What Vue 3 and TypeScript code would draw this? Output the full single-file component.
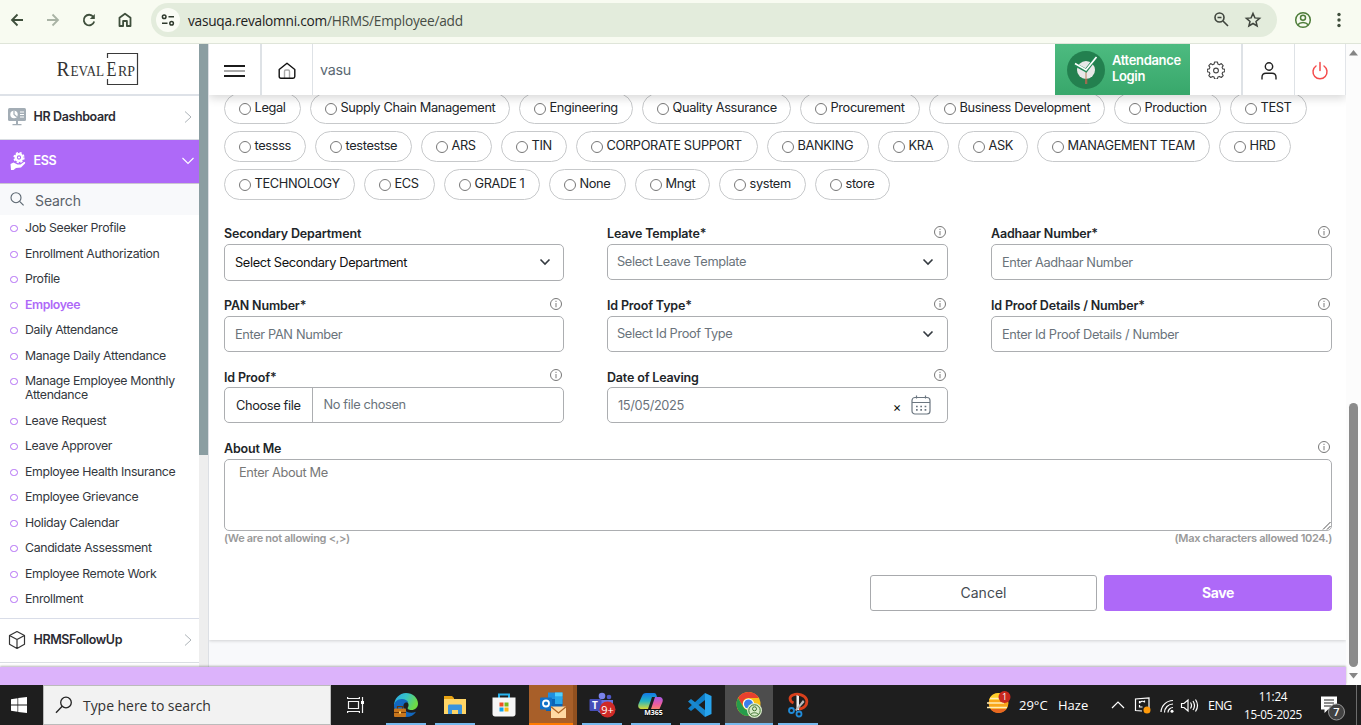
<script setup lang="ts">
interface Field {
  label: string
  text: string
  kind: 'input' | 'select' | 'file' | 'date' | 'none'
  info: boolean
  strong?: boolean
}

const chipRows: [string, number][][] = [
  [['Legal', 77], ['Supply Chain Management', 200], ['Engineering', 114], ['Quality Assurance', 149], ['Procurement', 120], ['Business Development', 176], ['Production', 107], ['TEST', 77]],
  [['tessss', 82], ['testestse', 97], ['ARS', 71], ['TIN', 66], ['CORPORATE SUPPORT', 182], ['BANKING', 102], ['KRA', 71], ['ASK', 70], ['MANAGEMENT TEAM', 173], ['HRD', 72]],
  [['TECHNOLOGY', 131], ['ECS', 71], ['GRADE 1', 96], ['None', 77], ['Mngt', 75], ['system', 87], ['store', 75]],
]

const menu = [
  'Job Seeker Profile', 'Enrollment Authorization', 'Profile', 'Employee', 'Daily Attendance',
  'Manage Daily Attendance', 'Manage Employee Monthly Attendance', 'Leave Request', 'Leave Approver',
  'Employee Health Insurance', 'Employee Grievance', 'Holiday Calendar', 'Candidate Assessment',
  'Employee Remote Work', 'Enrollment',
]

const fields: Field[] = [
  { label: 'Secondary Department', text: 'Select Secondary Department', kind: 'select', info: false, strong: true },
  { label: 'Leave Template*', text: 'Select Leave Template', kind: 'select', info: true },
  { label: 'Aadhaar Number*', text: 'Enter Aadhaar Number', kind: 'input', info: true },
  { label: 'PAN Number*', text: 'Enter PAN Number', kind: 'input', info: true },
  { label: 'Id Proof Type*', text: 'Select Id Proof Type', kind: 'select', info: true },
  { label: 'Id Proof Details / Number*', text: 'Enter Id Proof Details / Number', kind: 'input', info: true },
  { label: 'Id Proof*', text: 'No file chosen', kind: 'file', info: true },
  { label: 'Date of Leaving', text: '15/05/2025', kind: 'date', info: true },
]
</script>

<template>
  <div class="screen">
    <div class="chrome">
      <svg class="nav" width="150" height="43" viewBox="0 0 150 43" fill="none" stroke="#3f4f3c" stroke-width="1.8">
        <path d="M23 20H12M17.5 14.500L12 20l5.500 5.500" />
        <path d="M47 20H58M52.500 14.500L58 20l-5.500 5.500" stroke="#a9b3a5" />
        <path d="M93.300 16.800A5.300 5.300 0 1 0 94.200 21.500" />
        <path d="M94.800 14v5h-5z" fill="#3f4f3c" stroke="none" />
        <path d="M119.500 26V17.700l5.500-4 5.500 4V26h-3.600v-5h-3.800v5z" stroke-linejoin="round" />
      </svg>
      <div class="omnibox">
        <span class="tune">
          <svg width="14" height="14" viewBox="0 0 14 14" fill="none" stroke="#2f3a2d" stroke-width="1.5">
            <circle cx="3.200" cy="3.800" r="1.800" /><path d="M7.500 3.800H13M1 10.200h5.500" /><circle cx="10.600" cy="10.200" r="1.800" />
          </svg>
        </span>
        <span class="url"><b>vasuqa.revalomni.com</b>/HRMS/Employee/add</span>
        <svg class="omni-icons" width="50" height="20" viewBox="0 0 50 20" fill="none" stroke="#3f453d" stroke-width="1.600">
          <circle cx="6.500" cy="7.500" r="4.500" /><path d="M4.500 7.500h4M10 11l5 5" />
          <path d="M40 3.500l1.900 4.400 4.700.4-3.600 3.100 1.100 4.600-4.100-2.500-4.100 2.500 1.100-4.600-3.600-3.100 4.700-.4z" stroke-width="1.500" />
        </svg>
      </div>
      <svg class="profile" width="60" height="43" viewBox="0 0 60 43" fill="none" stroke="#4e7d3a" stroke-width="1.500">
        <circle cx="18" cy="20" r="7.300" /><circle cx="18" cy="17.800" r="2.500" /><path d="M12.800 24.800c2.500-3 7.900-3 10.400 0" />
        <g fill="#3f4f3c" stroke="none"><circle cx="54" cy="14.500" r="1.700" /><circle cx="54" cy="20" r="1.700" /><circle cx="54" cy="25.500" r="1.700" /></g>
      </svg>
    </div>

    <div class="page">
      <aside class="sidebar">
        <div class="logo">
          <svg width="90" height="40" viewBox="0 0 90 40">
            <path d="M55.500 10V5.500h30v31h-30V31" fill="none" stroke="#3a3a3a" stroke-width="1.200" />
            <g font-family="Liberation Serif, serif" fill="#333">
              <text x="4.500" y="28" font-size="22" textLength="13" lengthAdjust="spacingAndGlyphs">R</text>
              <text x="18.500" y="28" font-size="15" textLength="33.500" lengthAdjust="spacingAndGlyphs">EVAL</text>
              <text x="54.500" y="28" font-size="22" textLength="10" lengthAdjust="spacingAndGlyphs">E</text>
              <text x="66" y="28" font-size="15" textLength="17" lengthAdjust="spacingAndGlyphs">RP</text>
            </g>
          </svg>
        </div>
        <div class="section dash">
          <svg width="18" height="18" viewBox="0 0 18 18">
            <rect x="0" y="0" width="18" height="13" rx="1.500" fill="#a3adb5" /><path d="M8 13h2v3H8zM4.500 16h9v1.300h-9z" fill="#a3adb5" />
            <circle cx="6" cy="6.500" r="3.700" fill="#fff" /><path d="M6 3v3.500l2.700 2.300" stroke="#a3adb5" stroke-width="1.200" fill="none" />
            <path d="M12 4h4M12 6.500h4M12 9h4" stroke="#fff" stroke-width="1.100" />
          </svg>
          <span>HR Dashboard</span>
          <svg class="arrow" width="8" height="12" viewBox="0 0 8 12"><path d="M1 .5l6 5.500-6 5.500" fill="none" stroke="#adb3b8" /></svg>
        </div>
        <div class="section ess">
          <svg width="18" height="20" viewBox="0 0 18 20">
            <circle cx="10" cy="6.500" r="3.300" fill="none" stroke="#fff" stroke-width="2.300" />
            <circle cx="10" cy="6.500" r="4.900" fill="none" stroke="#fff" stroke-width="1.500" stroke-dasharray="2.200 1.650" />
            <circle cx="10" cy="6.500" r="1.100" fill="#fff" />
            <path d="M1.500 13l3-1.500 4 2h3l3.500-2.500c1.200 0 1.500.7 1 1.500L12 16.500 7 17l-2.500 2H2z" fill="#fff" />
          </svg>
          <span>ESS</span>
          <svg class="arrow down" width="12" height="8" viewBox="0 0 12 8"><path d="M.5 1L6 6.500 11.500 1" fill="none" stroke="#fff" stroke-width="1.100" /></svg>
        </div>
        <div class="search">
          <svg width="14" height="14" viewBox="0 0 14 14" fill="none" stroke="#5b6670" stroke-width="1.100"><circle cx="6" cy="5.700" r="5" /><path d="M9.600 9.300l4 4" /></svg>
          <span>Search</span>
        </div>
        <ul class="menu">
          <li v-for="m in menu" :key="m" :class="{ active: m === 'Employee' }"><i></i><span>{{ m }}</span></li>
        </ul>
        <div class="section follow">
          <svg width="18" height="20" viewBox="0 0 18 20" fill="none" stroke="#333" stroke-width="1.200" stroke-linejoin="round">
            <path d="M9 1.500l7.500 4v8.800L9 18.500l-7.500-4.200V5.500zM1.500 5.500L9 9.500l7.500-4M9 9.500v9" />
          </svg>
          <span>HRMSFollowUp</span>
          <svg class="arrow" width="8" height="12" viewBox="0 0 8 12"><path d="M1 .5l6 5.500-6 5.500" fill="none" stroke="#adb3b8" /></svg>
        </div>
      </aside>
      <div class="side-scroll"><div class="side-thumb"></div></div>

      <main class="main">
        <header class="topbar">
          <div class="cell menu-btn"><i></i><i></i><i></i></div>
          <div class="cell home">
            <svg width="18" height="18" viewBox="0 0 18 18" fill="none" stroke="#111" stroke-width="1.400" stroke-linejoin="round">
              <path d="M6.500 16V9.500c0-1 .4-1.500 1.200-1.500h2.600c.8 0 1.200.5 1.200 1.500V16" stroke="#aaa" /><path d="M1.200 7.500L9 1.200l7.800 6.300v7c0 1-.7 1.700-1.700 1.700H2.900c-1 0-1.700-.7-1.700-1.700z" />
            </svg>
          </div>
          <span class="who">vasu</span>
          <div class="attendance">
            <svg width="38" height="38" viewBox="0 0 38 38">
              <circle cx="19" cy="19" r="19" fill="#23804f" /><circle cx="19" cy="19" r="9" fill="#e8e8e8" />
              <path d="M18 27.500h2.300V33H18z" fill="#9a6b50" /><path d="M19 19v9" stroke="#c8a58a" stroke-width="1.500" />
              <path d="M8 13.500l11 6L29 6.500" fill="none" stroke="#238a58" stroke-width="3.600" /><path d="M8 12.500l11 6.500L29.500 6" fill="none" stroke="#fff" stroke-width="1.700" />
            </svg>
            <span>Attendance<br>Login</span>
          </div>
          <div class="cell gear">
            <svg width="18" height="18" viewBox="0 0 18 18" fill="none" stroke="#444" stroke-width="1.100" stroke-linejoin="round">
              <path d="M7.600 1h2.800l.5 2 1.500.7 1.900-1.100 1.900 2-1.100 1.800.6 1.500 2 .4v2.400l-2 .6-.6 1.500 1.100 1.800-1.900 1.900-1.900-1.100-1.500.7-.5 1.900H7.600l-.5-1.900-1.500-.7-1.900 1.100-1.900-1.900 1.100-1.800-.6-1.500-2-.6V8.300l2-.4.6-1.500-1.100-1.800 1.900-2 1.900 1.100L7.100 3z" /><circle cx="9" cy="9.500" r="2.400" />
            </svg>
          </div>
          <div class="cell user">
            <svg width="16" height="18" viewBox="0 0 16 18" fill="none" stroke="#222" stroke-width="1.400"><circle cx="8" cy="4.500" r="3.700" /><path d="M1 17.500v-2.200c0-2.400 1.600-4 4-4h6c2.400 0 4 1.600 4 4v2.200" /></svg>
          </div>
          <div class="cell power">
            <svg width="18" height="20" viewBox="0 0 18 20" fill="none" stroke="#f44b4b" stroke-width="1.500" stroke-linecap="round"><path d="M9 1.500v8M5 5a7 7 0 1 0 8 0" /></svg>
          </div>
        </header>

        <section class="card">
          <div class="chips">
            <div v-for="(row, r) in chipRows" :key="r" class="chip-row">
              <label v-for="c in row" :key="c[0]" class="chip" :style="{ width: c[1] + 'px' }"><i></i>{{ c[0] }}</label>
            </div>
          </div>

          <div class="grid">
            <div v-for="f in fields" :key="f.label" class="field" :class="{ low: f.kind === 'file' || f.kind === 'date' }">
              <div class="label">
                <span>{{ f.label }}</span>
                <svg v-if="f.info" width="13" height="13" viewBox="0 0 13 13" fill="none" stroke="#777"><circle cx="6" cy="6" r="5.500" /><path d="M6 5v4.200M6 2.800v1.300" stroke="#888" stroke-width="1.100" /></svg>
              </div>
              <div class="box" :class="[f.kind, { strong: f.strong }]">
                <span v-if="f.kind === 'file'" class="choose">Choose file</span>
                <span class="value">{{ f.text }}</span>
                <svg v-if="f.kind === 'select'" class="caret" width="12" height="8" viewBox="0 0 12 8"><path d="M1.500 1.500L6 6l4.500-4.500" fill="none" stroke="#343a40" stroke-width="1.600" /></svg>
                <template v-if="f.kind === 'date'">
                  <span class="clear">×</span>
                  <svg width="20" height="20" viewBox="0 0 20 20" fill="none" stroke="#6b7680" stroke-width="1.200">
                    <rect x="1" y="2.500" width="18" height="16.500" rx="3" /><path d="M1 7.500h18M5.500.5v3M14.500.5v3" />
                    <path d="M5 11.500h11M5 14.800h11" stroke-width="1.700" stroke-dasharray="1.700 2.600" />
                  </svg>
                </template>
              </div>
            </div>
          </div>

          <div class="label"><span>About Me</span>
            <svg width="13" height="13" viewBox="0 0 13 13" fill="none" stroke="#777"><circle cx="6" cy="6" r="5.500" /><path d="M6 5v4.200M6 2.800v1.300" stroke="#888" stroke-width="1.100" /></svg>
          </div>
          <div class="about"><span>Enter About Me</span>
            <svg width="9" height="9" viewBox="0 0 9 9"><path d="M1 8.500L8.500 1M5 8.500L8.500 5" stroke="#555" /></svg>
          </div>
          <div class="hints"><span>(We are not allowing &lt;,&gt;)</span><span>(Max characters allowed 1024.)</span></div>
          <div class="actions"><button class="cancel">Cancel</button><button class="save">Save</button></div>
        </section>
      </main>

      <div class="page-scroll">
        <svg width="15" height="18" viewBox="0 0 15 18"><path d="M3 11.500L7.500 6l4.500 5.500z" fill="#858585" /></svg>
        <div class="track"><div class="thumb"></div></div>
        <svg width="15" height="18" viewBox="0 0 15 18"><path d="M3 6l4.500 5.500L12 6z" fill="#858585" /></svg>
      </div>
      <div class="purple"></div>
    </div>

    <footer class="taskbar">
      <div class="start"><svg width="16" height="16" viewBox="0 0 16 16" fill="#fff"><path d="M0 2.200L6.500 1.200v6.400H0zM7.200 1.100L16 0v7.600H7.200zM0 8.400h6.500v6.400L0 13.800zM7.200 8.400H16V16l-8.800-1.100z" /></svg></div>
      <div class="tsearch">
        <svg width="18" height="18" viewBox="0 0 18 18" fill="none" stroke="#222" stroke-width="1.300"><circle cx="11" cy="6.500" r="5.300" /><path d="M7.200 10.300L1 16.800" /></svg>
        <span>Type here to search</span>
      </div>
      <div class="slot plain view"><svg width="18" height="16" viewBox="0 0 18 16" fill="none" stroke="#f2f2f2" stroke-width="1.200"><path d="M1.500 4.500h10v7h-10zM.6 0v1.500h11.800V0M.6 16v-1.500h11.800V16M15.500 0v16" /><path d="M14 4h3v3h-3z" fill="#fff" stroke="none" /></svg></div>
      <div class="slot">
        <svg width="26" height="26" viewBox="0 0 26 26">
          <defs><linearGradient id="eg" x1="0" y1="0" x2="1" y2=".4"><stop offset="0" stop-color="#2aa7e8" /><stop offset=".5" stop-color="#36c2c7" /><stop offset="1" stop-color="#6edb45" /></linearGradient></defs>
          <path d="M1 14C1 6.500 6.500 1 13 1s12 4.700 12 10.500c0 4-3 6.500-6.500 6.500-3 0-4.600-1-3.500-2.700 2-3.300-1-7.300-6-7.300-3.800 0-6.500 2.500-8 6z" fill="url(#eg)" />
          <path d="M1 14c0-3.500 3-7 8-7 3 0 5.400 1.300 6.300 3.300C11 9.600 9.500 13 11 16.500c1.800 4 7 5.500 12 3.200C21 23 17.500 25 13 25 6 25 1 20 1 14z" fill="#1268c0" />
          <rect x="1" y="16.500" width="12" height="8.500" rx="1" fill="#c8761c" /><path d="M4.500 16.500v-2h5v2M1 20.500h12" stroke="#6b3607" fill="none" stroke-width="1.200" /><rect x="6" y="19.500" width="2" height="2" fill="#ffd35a" />
        </svg>
      </div>
      <div class="slot">
        <svg width="24" height="22" viewBox="0 0 24 22"><path d="M1 3V2h8l2 2v3H1z" fill="#e8a313" /><path d="M1 5h22v15H1z" fill="#ffd566" /><path d="M5 20v-8c0-1 .5-1.500 1.500-1.500h11c1 0 1.500.5 1.500 1.500v8h-4v-4H9v4z" fill="#3b93dc" /></svg>
      </div>
      <div class="slot plain">
        <svg width="24" height="26" viewBox="0 0 24 26"><path d="M7 6V2.500h10V6" fill="none" stroke="#28b4ef" stroke-width="2" /><path d="M.5 5.500h23V22c0 1.500-1 2.500-2.500 2.500H3C1.500 24.500.5 23.500.5 22z" fill="#f6f6f6" /><path d="M7.500 10.500h4v4h-4z" fill="#f05125" /><path d="M12.500 10.500h4v4h-4z" fill="#7cba1b" /><path d="M7.500 15.500h4v4h-4z" fill="#10a5ed" /><path d="M12.500 15.500h4v4h-4z" fill="#fdb912" /></svg>
      </div>
      <div class="slot outlook">
        <svg width="28" height="28" viewBox="0 0 28 28"><path d="M9 1.500h14.500v7H9z" fill="#1f8fe0" /><path d="M16 1.500h7.500v4H16z" fill="#50d0ff" /><path d="M7 8h16.500v12H7z" fill="#0c63b5" /><path d="M16 6h7.500v7H16z" fill="#29a8ea" /><rect x="1" y="6.500" width="12" height="12" rx="1" fill="#0f70c8" /><circle cx="7" cy="12.500" r="3" fill="none" stroke="#fff" stroke-width="1.800" /><path d="M12 15.500h15V27H12z" fill="#ffd9a3" /><path d="M12 15.800l7.500 6.200 7.500-6.200" fill="none" stroke="#b06424" stroke-width="1.300" /></svg>
      </div>
      <div class="slot">
        <svg width="28" height="28" viewBox="0 0 28 28"><circle cx="14" cy="5" r="3.300" fill="#7b83eb" /><circle cx="21" cy="6" r="2.300" fill="#5059c9" /><path d="M9 9h16v8c0 4-3 6-8 6s-8-2-8-6z" fill="#6870dc" /><rect x="1.500" y="8" width="12" height="12" rx="1" fill="#464eb8" /><text x="7" y="17.500" text-anchor="middle" font-family="Open Sans, sans-serif" font-weight="700" font-size="10" fill="#fff">T</text><circle cx="19.500" cy="18.500" r="8" fill="#cf2a27" /><text x="19.500" y="22.500" text-anchor="middle" font-family="Open Sans, sans-serif" font-size="11" fill="#fff">9+</text></svg>
      </div>
      <div class="slot">
        <svg width="28" height="28" viewBox="0 0 28 28">
          <defs><linearGradient id="ma" x1="0" y1="0" x2="0" y2="1"><stop offset="0" stop-color="#1279e8" /><stop offset=".5" stop-color="#22b4c4" /><stop offset="1" stop-color="#d7d935" /></linearGradient><linearGradient id="mb" x1="0" y1="0" x2="0" y2="1"><stop offset="0" stop-color="#a55be8" /><stop offset=".5" stop-color="#ee5b9e" /><stop offset="1" stop-color="#fb9a55" /></linearGradient></defs>
          <path d="M9 2h8c2 0 2.500 2 3 4h-5l-4 12H5c-3 0-4.500-2-3.500-5L5 5c.7-2 2-3 4-3z" fill="url(#ma)" /><path d="M18 6h4c3 0 4.500 2 3.500 5l-3 7c-.7 2-2 2.500-4 2.500h-8c2 0 3-1 3.700-3z" fill="url(#mb)" /><rect x="7" y="18" width="19" height="7" fill="#111" /><text x="16.500" y="24" text-anchor="middle" font-family="Open Sans, sans-serif" font-size="7" font-weight="700" fill="#fff">M365</text>
        </svg>
      </div>
      <div class="slot">
        <svg width="26" height="26" viewBox="0 0 26 26"><path d="M18 1l6.500 3v18L18 25z" fill="#27a4ee" /><path d="M18 1v7L4 19l-3-2.500z" fill="#0f7fc9" /><path d="M18 25v-7L4 7 1 9.500z" fill="#1988cf" /></svg>
      </div>
      <div class="slot current">
        <svg width="28" height="28" viewBox="0 0 28 28"><circle cx="13.500" cy="13" r="12" fill="#fbc116" /><path d="M3.100 7A12 12 0 0 1 23.900 7H13.500a6 6 0 0 0-5.200 9z" fill="#e8402f" /><path d="M3.100 7A12 12 0 0 0 13.500 25l5.200-9a6 6 0 0 1-10.400 0z" fill="#269b4b" /><circle cx="13.500" cy="13" r="5.600" fill="#fff" /><circle cx="13.500" cy="13" r="4.500" fill="#3b7ded" /><circle cx="19.500" cy="19.500" r="7.500" fill="#d8ebca" /><g fill="none" stroke="#3f7330"><circle cx="19.500" cy="19.500" r="5.700" /><circle cx="19.500" cy="17.800" r="2" /><path d="M15.500 23.500c2-2.300 6-2.300 8 0" /></g></svg>
      </div>
      <div class="slot">
        <svg width="22" height="26" viewBox="0 0 22 26"><path d="M6.500 11C2 9 2 4.500 6 3c5-2 12 0 13.500 4.500 1.500 5-2.500 9.500-8 9.500" fill="none" stroke="#d9401c" stroke-width="2.800" /><path d="M9.500 3l2.500 1v14H9.500z" fill="#eee" /><path d="M16 8l1.500 2-8 9-1.500-1z" fill="#bbb" /><circle cx="4.500" cy="18.500" r="2.500" fill="none" stroke="#218bd8" stroke-width="1.800" /><circle cx="12" cy="22" r="2.500" fill="none" stroke="#218bd8" stroke-width="1.800" /></svg>
      </div>
      <div class="tray">
        <svg class="weather" width="26" height="24" viewBox="0 0 26 24">
          <circle cx="12.500" cy="13" r="10" fill="#f9a61a" /><path d="M3 10a10 10 0 0 1 19 0z" fill="#ffd02b" /><path d="M4.500 19a10 10 0 0 0 16 0z" fill="#e96820" /><path d="M4 8.500h10M1 13h17M1 17.500h20" stroke="#ffedb5" stroke-width="1.500" />
          <circle cx="18.500" cy="7" r="6" fill="#c9281e" /><text x="18.500" y="10.300" text-anchor="middle" font-family="Open Sans, sans-serif" font-size="9" fill="#fff">1</text>
        </svg>
        <span class="temp">29°C</span><span class="haze">Haze</span>
        <svg class="sys" width="90" height="24" viewBox="0 0 90 24" fill="none" stroke="#fff" stroke-width="1.200">
          <path d="M2 15l6-6 6 6" />
          <path d="M39 16V4.800L25.500 6v11.500l6.500.5" /><path d="M34.500 9a3.200 3.200 0 0 0-5 1.200V8M29 14h3.500M29.500 14.500V12M34.500 9.500v-2" /><circle cx="37" cy="17" r="3.500" fill="#ff9a0a" stroke="none" />
          <path d="M51 19A12 12 0 0 1 63 7.500M54.500 19.500a8.500 8.500 0 0 1 8.500-8.500M58 19.500a5 5 0 0 1 5-5" /><circle cx="62" cy="18.300" r="1.500" fill="#fff" stroke="none" />
          <path d="M71.500 10.500h2.500l4-3.500v11l-4-3.500h-2.500zM80.500 9.500q2 3 0 6M83 8q3 4.500 0 9M85.500 6.500q4 6 0 12" />
        </svg>
        <span class="eng">ENG</span>
        <div class="clock"><span>11:24</span><span>15-05-2025</span></div>
        <svg class="note" width="26" height="26" viewBox="0 0 26 26"><path d="M1 1.500h16v13H8L4.500 18v-3.500H1z" fill="#fff" /><path d="M4 5h10M4 8h10M4 11h7" stroke="#222" stroke-width="1.200" /><circle cx="16.500" cy="17" r="8" fill="#424242" stroke="#999" /><text x="16.500" y="21" text-anchor="middle" font-family="Open Sans, sans-serif" font-size="11" font-weight="600" fill="#fff">7</text></svg>
        <i class="peek"></i>
      </div>
    </footer>
  </div>
</template>

<style>
html, body { margin: 0; overflow: hidden; }
</style>

<style scoped>
* { box-sizing: border-box; }
svg { display: block; flex: none; }
.screen { width: 1361px; height: 725px; display: flex; flex-direction: column; overflow: hidden; font-family: Inter, sans-serif; font-size: 12.800px; color: #212529; background: #fff; }

.chrome { height: 44px; flex: none; display: flex; background: #f8fbf1; border-bottom: 1px solid #dfe5d9; }
.omnibox { width: 1126px; height: 34px; margin: 3px 0 0 1px; border-radius: 17px; background: #e3ecdc; display: flex; align-items: center; }
.tune { width: 24px; height: 24px; margin-left: 5px; border-radius: 50%; background: #fafcf5; display: flex; align-items: center; justify-content: center; }
.url { flex: 1; margin-left: 8px; font: 13.700px "Open Sans", sans-serif; letter-spacing: -0.25px; color: #474d45; }
.url b { font-weight: 400; color: #1d211c; }
.omni-icons { margin-right: 14px; }
.profile { margin-left: 8px; }

.page { height: 641px; flex: none; display: flex; flex-wrap: wrap; background: #f8f9fb; }
.sidebar { width: 199px; height: 623px; background: #fff; overflow: hidden; }
.logo { height: 52px; border-bottom: 2px solid #dee2e8; padding: 4px 0 0 52px; }
.section { height: 44px; display: flex; align-items: center; padding: 0 7px 0 8px; border-bottom: 1px solid #d9dde2; font-weight: 600; font-size: 12.500px; letter-spacing: -0.38px; color: #2b2b33; }
.section span { margin: -1px 0 0 7.500px; flex: 1; }
.dash { height: 44px; padding-bottom: 1px; }
.ess { background: #ae69f8; color: #fff; border-color: #cbc6d1; padding: 0 5px 1px 9px; }
.ess span { margin-left: 6.500px; }
.search { height: 31px; background: #f8f9fb; display: flex; align-items: center; padding-left: 10px; font-size: 14px; color: #5a6169; letter-spacing: -0.1px; }
.search svg { margin-bottom: 1px; }
.search span { margin: 2px 0 0 11px; }
.menu { list-style: none; margin: 0; padding: 6px 0 0 10px; height: 403px; }
.menu li { display: flex; line-height: 14px; font-size: 12.300px; margin-bottom: 11.500px; color: #33373d; letter-spacing: -0.34px; }
.menu li i { flex: none; width: 8px; height: 7px; margin: 4px 7px 0 0; border: 1.500px solid #b36ff5; border-radius: 4px; }
.menu .active { color: #ae69f8; font-weight: 600; letter-spacing: -0.4px; }
.follow { border-top: 1px solid #d9dde8; height: 45px; padding-top: 0; padding-bottom: 1px; }
.side-scroll { width: 10px; height: 623px; background: #eee; border-right: 1px solid #dcdfe4; }
.side-thumb { height: 411px; background: #8b9ea2; }

.main { width: 1137px; height: 623px; overflow: hidden; background: #f8f9fb; }
.topbar { position: relative; z-index: 1; height: 51px; background: #fff; display: flex; align-items: center; box-shadow: 0 3px 9px rgba(0, 0, 0, 0.16); }
.cell { height: 51px; display: flex; align-items: center; justify-content: center; padding-top: 3px; }
.menu-btn { width: 53px; padding-top: 2px; border-right: 2px solid #dee2e6; flex-direction: column; gap: 3px; }
.menu-btn i { width: 21px; height: 2px; background: #1b1b1b; }
.menu-btn i:nth-child(2) { background: #aaa; }
.home { width: 51px; border-right: 1px solid #dee2e6; }
.who { flex: 1; margin: 0 0 1px 7px; font-size: 14.300px; letter-spacing: -0.25px; color: #5a6872; }
.attendance { width: 135px; height: 51px; background: linear-gradient(#4dbb80, #38a76b); display: flex; align-items: center; padding-left: 12px; color: #fff; }
.attendance span { margin: -3px 0 0 7px; font-size: 13px; line-height: 16px; font-weight: 600; letter-spacing: -0.35px; }
.gear { width: 53px; border-right: 2px solid #dee2e6; padding-top: 1px; }
.user { width: 52px; border-right: 1px solid #dee2e6; }
.power { width: 51px; border-right: 1px solid #e2e5e9; }

.card { height: 547px; margin-top: -2px; padding: 0 14px 0 15px; background: #fff; box-shadow: 0 1px 3px rgba(0, 0, 0, 0.16); }
.chips { height: 130px; display: flex; flex-direction: column; gap: 7px; }
.chip-row { display: flex; gap: 9px; }
.chip { height: 31px; border: 1px solid #c7c9cb; border-radius: 16px; display: flex; align-items: center; padding: 0 0 2px 14px; font-size: 12.800px; letter-spacing: -0.35px; white-space: nowrap; }
.chip i { flex: none; width: 12px; height: 12px; border: 1px solid #777; border-radius: 50%; margin: 3px 3.500px 0 0; }
.grid { display: grid; grid-template-columns: 340px 341px 341px; grid-template-rows: 72px 71px 72px; column-gap: 43px; }
.label { height: 21px; display: flex; align-items: center; justify-content: space-between; font-size: 12.500px; font-weight: 600; letter-spacing: -0.17px; padding-right: 1px; }
.label svg { margin-bottom: 3px; }
.low .label span { padding-top: 1px; }
.box { height: 36px; border: 1px solid #acaeb1; border-radius: 5px; display: flex; align-items: center; padding: 0 14px 0 10px; letter-spacing: -0.36px; color: #6a737b; }
.box .value { flex: 1; }
.box.select { padding-left: 9px; padding-bottom: 1px; padding-right: 13px; }
.box.strong { height: 37px; padding: 0 12px 1px 10px; color: #111; }
.box.file { padding-left: 0; }
.choose { align-self: stretch; display: flex; align-items: center; padding: 0 11px; border-right: 1px solid #acaeb1; margin-right: 11px; color: #212529; }
.box.file .value { padding-bottom: 2px; }
.box.date { padding-right: 16px; }
.clear { color: #111; font-size: 13px; margin: 3px 10px 0 0; }
.about { height: 72px; border: 1px solid #acaeb1; border-radius: 5px; padding: 5px 0 0 14px; display: flex; justify-content: space-between; color: #777; letter-spacing: -0.36px; }
.about svg { align-self: flex-end; }
.hints { display: flex; justify-content: space-between; height: 44px; line-height: 14px; font-size: 11px; font-weight: 600; letter-spacing: -0.3px; color: #999; }
.actions { display: flex; justify-content: flex-end; gap: 7px; }
.actions button { height: 36px; width: 228px; border-radius: 3px; font: 14px Inter, sans-serif; padding: 0 0 1px; }
.actions .cancel { width: 227px; background: #fff; border: 1px solid #a8aaad; color: #454b52; }
.actions .save { background: #ae69f8; border: 0; color: #fff; font-weight: 700; letter-spacing: -0.4px; }

.page-scroll { width: 15px; height: 641px; margin-bottom: -18px; background: #fcfcfc; display: flex; flex-direction: column; }
.track { flex: 1; padding: 341px 3px 0; }
.thumb { width: 9px; height: 264px; border-radius: 5px; background: #8b8b8b; }
.purple { width: 1346px; height: 18px; background: #dcb3fb; box-shadow: 0 -1px 2px rgba(0, 0, 0, 0.28); }

.taskbar { height: 40px; flex: none; display: flex; background: #1e1e1e; font-family: "Open Sans", sans-serif; color: #fff; }
.start { width: 43px; display: flex; align-items: center; padding-left: 11px; }
.tsearch { width: 288px; margin-right: 2px; background: #f2f2f2; border: 1px solid #bbb; display: flex; align-items: center; padding-left: 11px; font-size: 14px; color: #333; letter-spacing: -0.05px; }
.tsearch span { margin-left: 10px; }
.slot { width: 48px; margin-right: 1px; display: flex; align-items: center; justify-content: center; background: linear-gradient(#76b9ed, #76b9ed) center bottom / 40px 2px no-repeat; }
.slot.plain { background: none; }
.slot.view { padding-right: 3px; }
.slot.outlook { background: linear-gradient(#ff7b00, #ff7b00) center bottom / 48px 2px no-repeat #a85f29; box-shadow: inset -4px 0 #91501f; }
.slot.current { background: linear-gradient(#76b9ed, #76b9ed) center bottom / 48px 2px no-repeat #4d4d4d; }
.tray { flex: 1; display: flex; align-items: center; font-size: 13px; }
.weather { margin: 0 7px 6px 163px; }
.temp { width: 39px; letter-spacing: 0; }
.haze { width: 52px; }
.sys { margin-right: 8px; }
.eng { width: 28px; font-size: 12.500px; letter-spacing: -0.5px; }
.clock { width: 74px; display: flex; flex-direction: column; align-items: center; font-size: 11.700px; line-height: 18px; letter-spacing: -0.3px; }
.note { margin: 6px 0 0 10px; }
.peek { width: 1px; height: 40px; background: #6c6c6c; margin-left: 10px; }
</style>
